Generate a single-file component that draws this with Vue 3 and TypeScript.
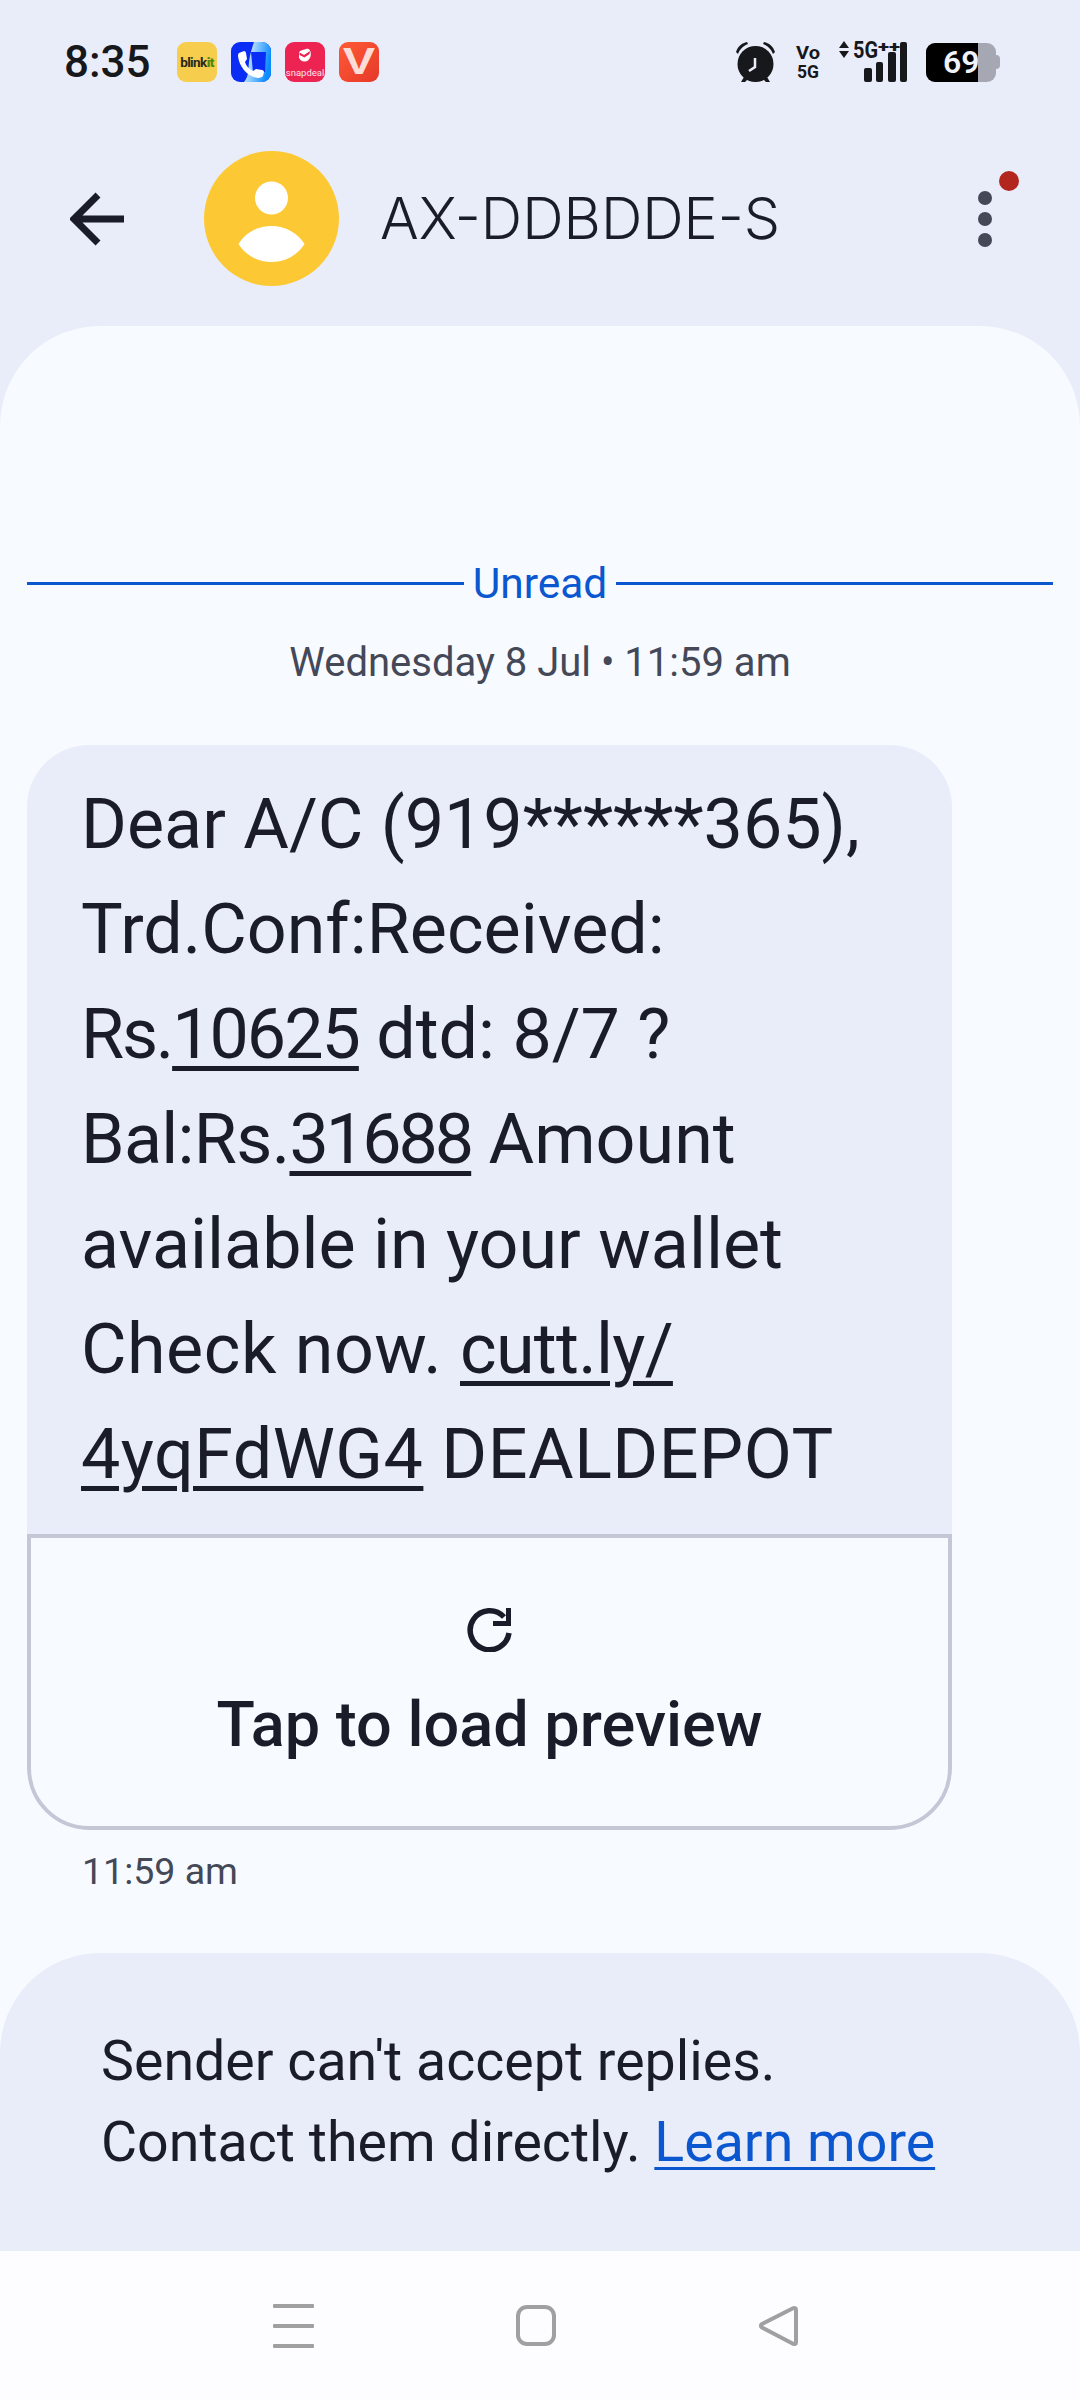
<script setup lang="ts">
type Part = { text: string; cls?: string }

const lines: Part[][] = [
  [{ text: 'Dear A/C (919******365),' }],
  [{ text: 'Trd.Conf:Received:' }],
  [{ text: 'Rs.', cls: 'tight' }, { text: '10625', cls: 'link num-a' }, { text: ' dtd: 8/7 ?' }],
  [{ text: 'Bal:Rs.', cls: 'snug' }, { text: '31688', cls: 'link num' }, { text: ' Amount' }],
  [{ text: 'available in your wallet' }],
  [{ text: 'Check now. ', cls: 'wide' }, { text: 'cutt.ly/', cls: 'link snug' }],
  [{ text: '4yqFdWG4', cls: 'link wide' }, { text: ' DEALDEPOT', cls: 'wide' }],
]
</script>

<template>
  <div class="screen">
    <div class="status">
      <span class="clock">8:35</span>
      <div class="apps">
        <div class="app blinkit"><span>blink<b>it</b></span></div>
        <div class="app phone">
          <svg viewBox="0 0 40 40" width="40" height="40">
            <path d="M23 0h17v40H13c5-6 4-12 5-20 1-8 3-14 5-20z" fill="url(#ph)" />
            <path d="M20 10h15l-1 20H22z" fill="#0a2cf5" />
            <path d="M8 11l5-2c1 0 2 1 2 2l1 6-2 3c1 4 4 7 8 9l3-2 6 1c1 0 2 1 2 2l-1 4c-1 1-3 2-5 2C17 35 8 25 7 14c0-1 0-2 1-3z" fill="#fff" />
            <defs>
              <linearGradient id="ph" x1="0" y1="0" x2="1" y2="0.3">
                <stop offset="0" stop-color="#ffffff" />
                <stop offset="1" stop-color="#0a8cff" />
              </linearGradient>
            </defs>
          </svg>
        </div>
        <div class="app snap">
          <svg viewBox="0 0 40 24" width="40" height="24">
            <path d="M14 10c0-1 1-2 2-2.500l5-1.500c2-.5 3 0 4 1.500 1 2 1 4 .5 6-1 3-3 5-6 5-3 0-5-2-5.500-4z" fill="#fff" />
            <path d="M14.500 9.500l4.500 2.500 6-4-.5 3-5 3.500-5-2.500z" fill="#ed2351" />
          </svg>
          <span>snapdeal</span>
        </div>
        <div class="app vid"><span>V</span></div>
      </div>
      <div class="sys">
        <svg class="alarm" viewBox="0 0 42 42" width="42" height="42">
          <circle cx="20.500" cy="23" r="18" fill="#17181c" />
          <path d="M1 11C3 5 7 2 12 1l1 2C8 5 5 8 3 13zM40 11C38 5 34 2 29 1l-1 2c5 2 8 5 10 10z" fill="#17181c" />
          <path d="M9 36l-3 5h4l3-3zM32 36l3 5h-4l-3-3z" fill="#17181c" />
          <path d="M20 17v9l-6 4" fill="none" stroke="#e9edf9" stroke-width="2.500" />
        </svg>
        <svg class="vo" viewBox="0 0 24 38" width="24" height="38">
          <text x="0" y="16" textLength="24" lengthAdjust="spacingAndGlyphs">Vo</text>
          <text x="1" y="35" textLength="22" lengthAdjust="spacingAndGlyphs">5G</text>
        </svg>
        <svg class="signal" viewBox="0 0 70 42" width="70" height="42">
          <path d="M6 0l5 7H1zM1 10h10l-5 7z" fill="#17181c" />
          <text x="15" y="17" textLength="25" lengthAdjust="spacingAndGlyphs" class="sig-text">5G</text>
          <text x="40" y="11" textLength="22" lengthAdjust="spacingAndGlyphs" class="sig-plus">++</text>
          <rect x="26" y="27" width="8" height="14" rx="2" fill="#17181c" />
          <rect x="38" y="21" width="7" height="20" rx="2" fill="#17181c" />
          <rect x="50" y="11" width="8" height="30" rx="2" fill="#17181c" />
          <rect x="62" y="1" width="7" height="40" rx="2" fill="#17181c" />
        </svg>
        <div class="battery">
          <div class="batt-body">
            <div class="batt-fill"></div>
            <span class="batt-text">69</span>
          </div>
          <div class="batt-tip"></div>
        </div>
      </div>
    </div>

    <header class="top">
      <svg class="back" viewBox="0 0 54 54" width="54" height="54">
        <path d="M54 27H5M28 3L4 27l24 24" fill="none" stroke="#1a1c29" stroke-width="7" />
      </svg>
      <div class="avatar">
        <svg viewBox="0 0 135 135" width="135" height="135">
          <circle cx="67.500" cy="47" r="16.500" fill="#fff" />
          <path d="M34.500 93c7-11 19-18 33-18s26 7 33 18c-7 11-19 18-33 18s-26-7-33-18z" fill="#fff" />
        </svg>
      </div>
      <h1 class="name">AX-DDBDDE-S</h1>
      <div class="more">
        <i></i><i></i><i></i>
        <b class="badge"></b>
      </div>
    </header>

    <main class="sheet">
      <div class="unread">
        <span class="rule"></span>
        <span class="unread-text">Unread</span>
        <span class="rule"></span>
      </div>
      <p class="date">Wednesday 8 Jul • 11:59 am</p>

      <div class="bubble">
        <div class="msg">
          <div v-for="(line, i) in lines" :key="i" class="line">
            <template v-for="(p, j) in line" :key="j">
              <span :class="p.cls">{{ p.text }}</span>
            </template>
          </div>
        </div>
        <div class="preview">
          <svg viewBox="0 0 46 46" width="46" height="46">
            <path d="M37 11A19.500 19.500 0 1 0 42 27" fill="none" stroke="#1a1c29" stroke-width="5.500" />
            <path d="M44 2v18H26v-5h13V2z" fill="#1a1c29" />
          </svg>
          <span class="preview-text">Tap to load preview</span>
        </div>
      </div>
      <p class="time">11:59 am</p>

      <div class="notice">
        <p>Sender can't accept replies.</p>
        <p>Contact them directly. <a class="learn">Learn more</a></p>
      </div>
    </main>

    <nav class="nav">
      <div class="burger"><i></i><i></i><i></i></div>
      <div class="square"></div>
      <svg viewBox="0 0 42 42" width="42" height="42">
        <path d="M38 4.500v33c0 1.500-1.500 2-3 1.200L4 22.500c-1.500-1-1.500-2.500 0-3.500L35 3.300c1.500-.8 3-.3 3 1.200z" fill="none" stroke="#a0a0a0" stroke-width="4" stroke-linejoin="round" />
      </svg>
    </nav>
  </div>
</template>

<style>
html, body { margin: 0; background: #e9edf9; }
</style>

<style scoped>
.screen {
  width: 1080px; height: 2400px; display: flex; flex-direction: column;
  background: #e9edf9; color: #1a1c29; overflow: hidden;
  font-family: Roboto, "Liberation Sans", sans-serif;
}
.status { height: 124px; display: flex; align-items: center; padding: 0 80px 0 64px; box-sizing: border-box; }
.clock { font-size: 44px; font-weight: 500; width: 113px; color: #17181c; }
.apps { display: flex; gap: 14px; }
.app { width: 40px; height: 40px; border-radius: 9px; overflow: hidden; display: flex; align-items: center; justify-content: center; }
.blinkit { background: #f6cd4c; font-size: 13.500px; font-weight: 700; color: #2b2a1c; letter-spacing: -.6px; }
.blinkit b { color: #4c8a12; }
.phone { background: #0a2cf5; }
.snap { background: #ed2351; color: #fbe3e8; flex-direction: column; font-size: 9.500px; line-height: 11px; }
.snap svg { flex: none; }
.snap span { margin-bottom: 4px; }
.vid { background: linear-gradient(135deg, #ff5a36, #e6392a); color: #fbdcd6; font-size: 36px; line-height: 40px; font-weight: 700; font-family: "Liberation Sans", sans-serif; }
.vid span { display: inline-block; transform: scaleX(1.35); }
.sys { margin-left: auto; display: flex; align-items: center; }
.alarm { display: block; }
.vo { margin-left: 19px; overflow: visible; }
.vo text { font-size: 19px; font-weight: 700; fill: #17181c; font-family: Roboto, sans-serif; }
.signal { margin-left: 18px; overflow: visible; }
.sig-text { font-size: 23px; font-weight: 700; fill: #17181c; font-family: Roboto, sans-serif; }
.sig-plus { font-size: 15px; font-weight: 900; fill: #17181c; font-family: Roboto, sans-serif; }
.battery { margin-left: 18px; display: flex; align-items: center; }
.batt-body { width: 70px; height: 39px; border-radius: 9px; background: #a5a7b2; position: relative; overflow: hidden; }
.batt-fill { width: 52px; height: 100%; background: #000; }
.batt-text { position: absolute; left: 17px; top: 0; line-height: 39px; font-size: 32px; font-weight: 600; color: #f0f2fa; }
.batt-tip { width: 4px; height: 14px; background: #a5a7b2; border-radius: 0 4px 4px 0; }

.top { height: 202px; display: flex; align-items: flex-start; box-sizing: border-box; padding-top: 27px; position: relative; }
.back { margin: 41px 0 0 70px; }
.avatar { margin-left: 80px; width: 135px; height: 135px; border-radius: 50%; background: #fcc934; }
.avatar svg { display: block; }
.name { margin: 30px 0 0 41px; font-family: Inter, Roboto, sans-serif; font-size: 57.500px; line-height: 75px; font-weight: 300; color: #1a1c29; }
.more { position: absolute; left: 978px; top: 27px; height: 135px; display: flex; flex-direction: column; justify-content: center; gap: 7px; }
.more i { display: block; width: 14px; height: 14px; border-radius: 50%; background: #444857; }
.badge { position: absolute; left: 21px; top: 20px; width: 20px; height: 20px; border-radius: 50%; background: #b3261e; }

.sheet { flex: 1; background: #f7faff; border-radius: 100px 100px 0 0; display: flex; flex-direction: column; }
.unread { margin-top: 227px; padding: 0 27px; display: flex; align-items: center; gap: 9px; height: 60px; }
.rule { flex: 1; height: 3px; background: #0b57d0; }
.unread-text { font-size: 42.500px; color: #0b57d0; }
.date { margin: 22px 0 0; text-align: center; font-size: 40px; line-height: 56px; color: #444857; }
.bubble { margin: 54px 0 0 27px; width: 925px; border-radius: 62px; overflow: hidden; background: #e9edf9; }
.msg { padding: 27px 54px 0; height: 789px; box-sizing: border-box; font-size: 70px; line-height: 105px; }
.line { white-space: pre; }
.link { text-decoration: underline; text-decoration-thickness: 5px; text-underline-offset: 8px; }
.num { letter-spacing: -3px; }
.num-a { letter-spacing: -2px; }
.tight { letter-spacing: -2.200px; }
.snug { letter-spacing: -.7px; }
.wide { letter-spacing: .5px; }
.preview { box-sizing: border-box; height: 296px; background: #f7faff; border: 4px solid #c4c7d6; border-radius: 0 0 62px 62px; display: flex; flex-direction: column; align-items: center; padding-top: 68px; }
.preview svg { display: block; }
.preview-text { font-size: 63px; font-weight: 500; line-height: 80px; margin-top: 33px; }
.time { margin: 16px 0 0 82px; font-size: 37.500px; line-height: 50px; color: #444857; }
.notice { margin-top: 57px; flex: 1; background: #e9edf9; border-radius: 100px 100px 0 0; padding: 68px 0 0 101px; font-size: 55.500px; line-height: 81px; }
.notice p { margin: 0; }
.learn { color: #0b57d0; text-decoration: underline; text-decoration-thickness: 3px; text-underline-offset: 6px; }

.nav { height: 149px; background: #fdfdff; position: relative; display: flex; align-items: center; justify-content: space-between; padding: 0 280px 0 273px; box-sizing: border-box; }
.burger { width: 41px; display: flex; flex-direction: column; gap: 16px; }
.burger i { display: block; height: 4px; background: #a0a0a0; border-radius: 1px; }
.square { width: 40px; height: 41px; box-sizing: border-box; border: 4px solid #a0a0a0; border-radius: 11px; }
</style>
